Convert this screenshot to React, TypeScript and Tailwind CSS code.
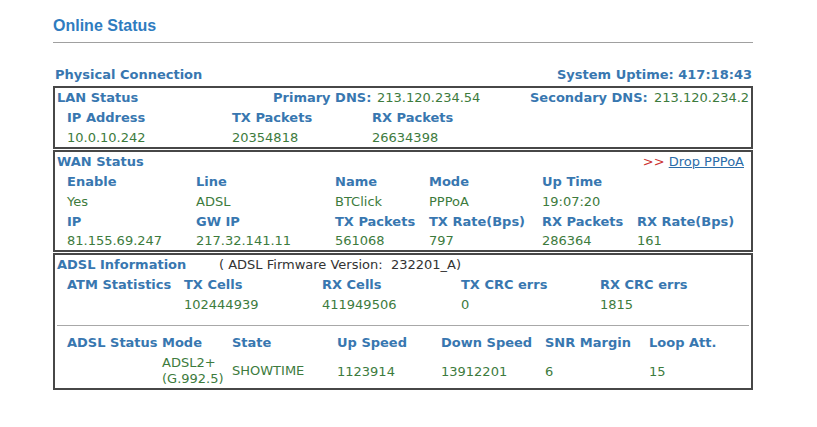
const lbl = "font-bold text-[#3877b0]";
const val = "text-[#3d7b3d]";

function Row({ cells, cls, pl = "pl-[12px]", h = "h-[20px]" }: { cells: [string, number][]; cls: string; pl?: string; h?: string }) {
  return (
    <div className={`flex items-center ${h} ${pl}`}>
      {cells.map(([t, w], i) => (
        <div key={i} className={`${cls} shrink-0 whitespace-nowrap`} style={{ width: w }}>
          {t}
        </div>
      ))}
    </div>
  );
}

export default function App() {
  return (
    <div className="w-[817px] h-[427px] bg-white font-['DejaVu_Sans',Verdana,sans-serif] text-[13px] leading-[20px]">
      <div className="ml-[53px] w-[700px]">
        <div className="pt-[16px] font-['Liberation_Sans',Arial,sans-serif] font-bold text-[16px] text-[#2f7cbf]">Online Status</div>
        <div className="mt-[6px] border-t border-[#a0a0a0]" />
        <div className="mt-[22px] flex justify-between pl-[2px] pr-[1px] h-[20px]">
          <span className={lbl}>Physical Connection</span>
          <span className={lbl}>System Uptime: 417:18:43</span>
        </div>

        {/* LAN */}
        <div className="border-2 border-[#474747] mt-px">
          <div className="flex items-center h-[20px] pl-[2px] whitespace-nowrap">
            <span className={`${lbl} w-[216px]`}>LAN Status</span>
            <span className={`${lbl} w-[104px]`}>Primary DNS:</span>
            <span className={`${val} w-[153px]`}>213.120.234.54</span>
            <span className={`${lbl} w-[124px]`}>Secondary DNS:</span>
            <span className={val}>213.120.234.2</span>
          </div>
          <Row cls={lbl} cells={[["IP Address", 165], ["TX Packets", 140], ["RX Packets", 140]]} />
          <Row h="h-[19px]" cls={val} cells={[["10.0.10.242", 165], ["20354818", 140], ["26634398", 140]]} />
        </div>

        {/* WAN */}
        <div className="border-2 border-[#474747] mt-px">
          <div className="flex items-center justify-between h-[20px] pl-[2px] pr-[7px]">
            <span className={lbl}>WAN Status</span>
            <span>
              <span className="text-[#cc3333]">&gt;&gt; </span>
              <a className="text-[#2b6ca8] underline" href="#">Drop PPPoA</a>
            </span>
          </div>
          <Row cls={lbl} cells={[["Enable", 129], ["Line", 139], ["Name", 94], ["Mode", 113], ["Up Time", 95]]} />
          <Row cls={val} cells={[["Yes", 129], ["ADSL", 139], ["BTClick", 94], ["PPPoA", 113], ["19:07:20", 95]]} />
          <Row cls={lbl} cells={[["IP", 129], ["GW IP", 139], ["TX Packets", 94], ["TX Rate(Bps)", 113], ["RX Packets", 95], ["RX Rate(Bps)", 110]]} />
          <Row h="h-[18px]" cls={val} cells={[["81.155.69.247", 129], ["217.32.141.11", 139], ["561068", 94], ["797", 113], ["286364", 95], ["161", 110]]} />
        </div>

        {/* ADSL */}
        <div className="border-2 border-[#474747] mt-px">
          <div className="flex items-center h-[20px] pl-[2px] whitespace-nowrap">
            <span className={`${lbl} w-[162px]`}>ADSL Information</span>
            <span className="text-[#333]">(&nbsp;ADSL Firmware Version:&nbsp;&nbsp;232201_A)</span>
          </div>
          <Row cls={lbl} cells={[["ATM Statistics", 117], ["TX Cells", 138], ["RX Cells", 139], ["TX CRC errs", 139], ["RX CRC errs", 139]]} />
          <Row cls={val} cells={[["", 117], ["102444939", 138], ["411949506", 139], ["0", 139], ["1815", 139]]} />
          <div className="mt-[10px] mx-[2px] border-t border-[#a8a8a8]" />
          <div className="mt-[7px]">
            <Row cls={lbl} cells={[["ADSL Status", 95], ["Mode", 70], ["State", 105], ["Up Speed", 104], ["Down Speed", 104], ["SNR Margin", 104], ["Loop Att.", 90]]} />
          </div>
          <div className="flex items-center h-[34px] pl-[12px] mt-px">
            <div className="w-[95px] shrink-0" />
            <div className={`${val} w-[70px] shrink-0 leading-[16px]`}>
              ADSL2+
              <br />
              (G.992.5)
            </div>
            <div className={`${val} w-[105px] shrink-0`}>SHOWTIME</div>
            <div className={`${val} w-[104px] shrink-0 pt-[2px]`}>1123914</div>
            <div className={`${val} w-[104px] shrink-0 pt-[2px]`}>13912201</div>
            <div className={`${val} w-[104px] shrink-0 pt-[2px]`}>6</div>
            <div className={`${val} w-[90px] shrink-0 pt-[2px]`}>15</div>
          </div>
        </div>
      </div>
    </div>
  );
}
